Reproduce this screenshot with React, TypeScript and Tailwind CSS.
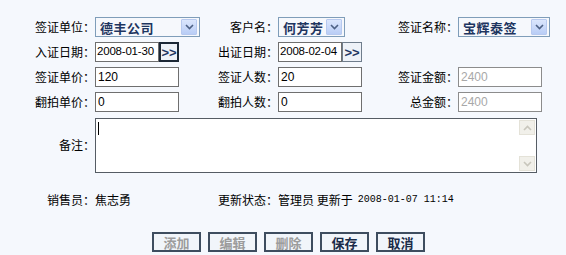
import React from 'react';

const cjk = { fontFamily: '"Noto Sans CJK SC", "Liberation Sans", sans-serif' };
const latin = { fontFamily: '"Liberation Sans", "Noto Sans CJK SC", sans-serif' };

const Label = ({ text, className = '' }: { text: string; className?: string }) => (
  <div className={`flex items-center justify-end text-[12px] text-black leading-none ${className}`} style={cjk}>
    <span className="whitespace-nowrap">{text}</span>
  </div>
);

const Chevron = ({ up = false, color = '#4d6185' }: { up?: boolean; color?: string }) => (
  <svg width="9" height="6" viewBox="0 0 9 6" className={up ? 'rotate-180' : ''}>
    <path d="M1 1 L4.5 4.5 L8 1" fill="none" stroke={color} strokeWidth="1.6" />
  </svg>
);

const Select = ({ value, width }: { value: string; width: string }) => (
  <div className={`flex h-[20px] items-center justify-between border border-[#7f9db9] bg-[#f6f8fc] pl-[4px] pr-[2px] ${width}`}>
    <span className="text-[13px] font-bold text-[#1e3560] leading-none tracking-[0.5px]" style={cjk}>
      {value}
    </span>
    <span className="flex h-[16px] w-[16px] items-center justify-center rounded-[1px] border border-[#b7c9ef] bg-gradient-to-b from-[#dbe6fd] to-[#b9cdf6]">
      <Chevron />
    </span>
  </div>
);

const Input = ({ value, disabled = false }: { value: string; disabled?: boolean }) => (
  <div
    className={`flex h-[20px] w-[84px] items-center border bg-white px-[2px] text-[12px] leading-none ${
      disabled ? 'border-[#8c8c8c] text-[#a8a8a8]' : 'border-[#6f6f6f] text-black'
    }`}
    style={latin}
  >
    {value}
  </div>
);

const DateInput = ({ value, focused = false }: { value: string; focused?: boolean }) => (
  <div className="flex h-[20px] w-[84px] items-stretch">
    <div
      className="flex w-[64px] items-center overflow-hidden whitespace-nowrap border border-[#6f6f6f] bg-white pl-[1px] text-[11.5px] leading-none tracking-[-0.2px] text-black"
      style={latin}
    >
      {value}
    </div>
    <div
      className={`flex w-[20px] items-center justify-center bg-[#eef2f8] text-[13px] font-bold leading-none text-[#1e3560] ${
        focused ? 'border-2 border-[#1c2836]' : 'border border-[#6f7d8c]'
      }`}
      style={latin}
    >
      &gt;&gt;
    </div>
  </div>
);

const Button = ({ text, disabled = false }: { text: string; disabled?: boolean }) => (
  <button
    className={`flex h-[20px] w-[49px] items-center justify-center border-2 border-[#3e4d5f] bg-[#f1f5fa] text-[13px] font-bold leading-none ${
      disabled ? 'text-[#9c9c9c]' : 'text-[#1a2b48]'
    }`}
    style={cjk}
  >
    {text}
  </button>
);

export default function App() {
  return (
    <div className="min-h-screen w-full bg-[#f5f8fd] pt-[17px]">
      <div className="grid grid-cols-[95px_105px_78px_85px_95px_100px] grid-rows-[20px_20px_20px_20px_55px] gap-y-[5px]">
        <Label text="签证单位：" />
        <Select value="德丰公司" width="w-[105px]" />
        <Label text="客户名：" />
        <Select value="何芳芳" width="w-[67px]" />
        <Label text="签证名称：" />
        <Select value="宝辉泰签" width="w-[92px]" />

        <Label text="入证日期：" />
        <DateInput value="2008-01-30" focused />
        <Label text="出证日期：" />
        <DateInput value="2008-02-04" />
        <div />
        <div />

        <Label text="签证单价：" />
        <Input value="120" />
        <Label text="签证人数：" />
        <Input value="20" />
        <Label text="签证金额：" />
        <Input value="2400" disabled />

        <Label text="翻拍单价：" />
        <Input value="0" />
        <Label text="翻拍人数：" />
        <Input value="0" />
        <Label text="总金额：" />
        <Input value="2400" disabled />

        <Label text="备注：" className="mt-px" />
        <div className="col-span-5 mt-px flex h-[55px] w-[442px] border border-[#555c64] bg-white">
          <div className="relative flex-1">
            <span className="absolute left-[2px] top-[3px] h-[13px] w-px bg-black" />
          </div>
          <div className="my-px mr-px flex w-[16px] flex-col justify-between bg-white">
            <div className="flex h-[15px] items-center justify-center border border-[#e4e2d8] bg-[#f1f0ea]">
              <Chevron up color="#c8c6bc" />
            </div>
            <div className="flex h-[15px] items-center justify-center border border-[#e4e2d8] bg-[#f1f0ea]">
              <Chevron color="#c8c6bc" />
            </div>
          </div>
        </div>
      </div>

      <div className="mt-[20px] grid h-[16px] grid-cols-[95px_105px_78px_auto] items-center text-[12px] leading-none text-black">
        <Label text="销售员：" />
        <span style={cjk}>焦志勇</span>
        <Label text="更新状态：" />
        <span className="flex items-center gap-[5px]" style={cjk}>
          管理员 更新于
          <span className="text-[10px]" style={{ fontFamily: '"Liberation Mono", monospace' }}>
            2008-01-07 11:14
          </span>
        </span>
      </div>

      <div className="mt-[24px] flex gap-[7px] pl-[152px]">
        <Button text="添加" disabled />
        <Button text="编辑" disabled />
        <Button text="删除" disabled />
        <Button text="保存" />
        <Button text="取消" />
      </div>
    </div>
  );
}
